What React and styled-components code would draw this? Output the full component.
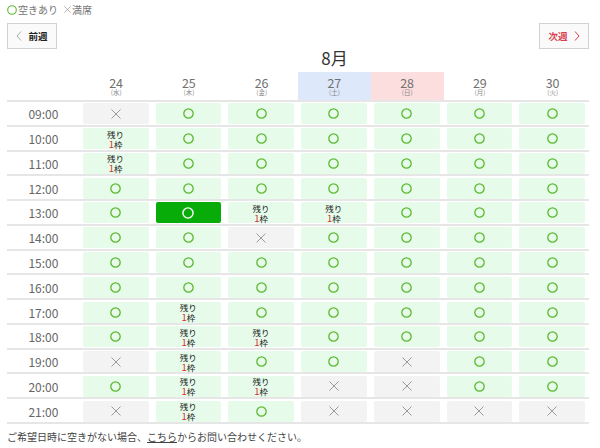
import React from "react";
import styled, { createGlobalStyle } from "styled-components";

const Global = createGlobalStyle`
  html, body { margin: 0; padding: 0; background: #fff; }
  body { font-family: "Noto Sans CJK JP", "Noto Sans", sans-serif; color: #333; }
`;

const Page = styled.div`
  width: 582px;
  padding: 0 11px 0 7px;
`;

const Legend = styled.div`
  display: flex;
  align-items: center;
  height: 19px;
  font-size: 10px;
  color: #777;
  gap: 6px;
`;

const LegendItem = styled.span`
  display: inline-flex;
  align-items: center;
  gap: 1px;
`;

const Nav = styled.div`
  display: flex;
  justify-content: space-between;
  margin-top: 4px;
`;

const NavButton = styled.button`
  width: 50px;
  height: 26px;
  box-sizing: border-box;
  border: 1px solid #d2d2d2;
  background: #fafafa;
  display: flex;
  align-items: center;
  justify-content: center;
  gap: 6px;
  padding: 0;
  font-family: inherit;
  font-size: 9.5px;
  font-weight: 700;
  color: ${(p) => (p.$next ? "#d8404e" : "#222")};
  cursor: pointer;
`;

const Month = styled.div`
  margin-left: 73px;
  text-align: center;
  font-size: 17px;
  color: #333;
  height: 23px;
  line-height: 17px;
`;

const HeadRow = styled.div`
  display: grid;
  grid-template-columns: repeat(8, 1fr);
  height: 30px;
  box-sizing: border-box;
  border-bottom: 2px solid #e6e6e6;
`;

const HeadCell = styled.div`
  display: flex;
  flex-direction: column;
  align-items: center;
  justify-content: center;
  background: ${(p) => p.$bg || "transparent"};
  color: #707070;
`;

const DayNum = styled.span`
  font-size: 12.5px;
  line-height: 13px;
`;

const DayW = styled.span`
  font-size: 6.5px;
  line-height: 7px;
  color: #888;
`;

const Row = styled.div`
  display: grid;
  grid-template-columns: repeat(8, 1fr);
  height: calc(322px / 13);
  box-sizing: border-box;
  border-bottom: 2px solid #e6e6e6;
  align-items: center;
`;

const TimeCell = styled.div`
  text-align: center;
  font-size: 12px;
  color: #666;
  padding-top: 1px;
`;

const bgFor = (t) =>
  t === "sel" ? "#08ac08" : t === "x" ? "#f3f3f3" : "#e6fbea";

const SlotCell = styled.div`
  margin: 1px 4px 0 3px;
  height: 21px;
  border-radius: 2px;
  background: ${(p) => bgFor(p.$t)};
  display: flex;
  align-items: center;
  justify-content: center;
`;

const Rest = styled.div`
  display: flex;
  flex-direction: column;
  align-items: center;
  font-size: 8.5px;
  line-height: 10px;
  color: #222;
`;

const Red = styled.span`
  color: #d3322d;
  font-size: 9.5px;
`;

const Footer = styled.div`
  margin-top: 5px;
  font-size: 10px;
  color: #444;
`;

const Link = styled.span`
  text-decoration: underline;
`;

const Circle = ({ size = 11, color = "#5ab82e", sw = 1.4 }) => (
  <svg width={size} height={size} viewBox="0 0 12 12">
    <circle cx="6" cy="6" r={6 - sw / 2 - 0.2} fill="none" stroke={color} strokeWidth={sw} />
  </svg>
);

const Cross = ({ size = 10, color = "#9a9a9a" }) => (
  <svg width={size} height={size} viewBox="0 0 10 10">
    <path d="M0.5 0.5 L9.5 9.5 M9.5 0.5 L0.5 9.5" stroke={color} strokeWidth="1" />
  </svg>
);

const Chevron = ({ dir, color }) => (
  <svg width="6" height="10" viewBox="0 0 6 10">
    <path
      d={dir === "l" ? "M5 0.5 L1 5 L5 9.5" : "M1 0.5 L5 5 L1 9.5"}
      fill="none"
      stroke={color}
      strokeWidth="1"
    />
  </svg>
);

const days = [
  { d: "24", w: "水" },
  { d: "25", w: "木" },
  { d: "26", w: "金" },
  { d: "27", w: "土", bg: "#dde8fb" },
  { d: "28", w: "日", bg: "#fddede" },
  { d: "29", w: "月" },
  { d: "30", w: "火" },
];

const rows = [
  ["09:00", "x o o o o o o"],
  ["10:00", "r o o o o o o"],
  ["11:00", "r o o o o o o"],
  ["12:00", "o o o o o o o"],
  ["13:00", "o sel r r o o o"],
  ["14:00", "o o x o o o o"],
  ["15:00", "o o o o o o o"],
  ["16:00", "o o o o o o o"],
  ["17:00", "o r o o o o o"],
  ["18:00", "o r r o o o o"],
  ["19:00", "x r o o x o o"],
  ["20:00", "o r r x x o o"],
  ["21:00", "x r o x x x x"],
];

const Slot = ({ t }) => (
  <SlotCell $t={t}>
    {t === "o" && <Circle />}
    {t === "sel" && <Circle color="#fff" size={12} />}
    {t === "x" && <Cross />}
    {t === "r" && (
      <Rest>
        <span>残り</span>
        <span>
          <Red>1</Red>枠
        </span>
      </Rest>
    )}
  </SlotCell>
);

export default function App() {
  return (
    <Page>
      <Global />
      <Legend>
        <LegendItem>
          <Circle size={10} sw={1.3} />
          空きあり
        </LegendItem>
        <LegendItem>
          <Cross size={7} color="#999" />
          満席
        </LegendItem>
      </Legend>
      <Nav>
        <NavButton>
          <Chevron dir="l" color="#aaa" />
          前週
        </NavButton>
        <NavButton $next>
          次週
          <Chevron dir="r" color="#d8404e" />
        </NavButton>
      </Nav>
      <Month>8月</Month>
      <HeadRow>
        <HeadCell />
        {days.map((d) => (
          <HeadCell key={d.d} $bg={d.bg}>
            <DayNum>{d.d}</DayNum>
            <DayW>({d.w})</DayW>
          </HeadCell>
        ))}
      </HeadRow>
      {rows.map(([time, s]) => (
        <Row key={time}>
          <TimeCell>{time}</TimeCell>
          {s.split(" ").map((t, i) => (
            <Slot key={i} t={t} />
          ))}
        </Row>
      ))}
      <Footer>
        ご希望日時に空きがない場合、<Link>こちら</Link>からお問い合わせください。
      </Footer>
    </Page>
  );
}
